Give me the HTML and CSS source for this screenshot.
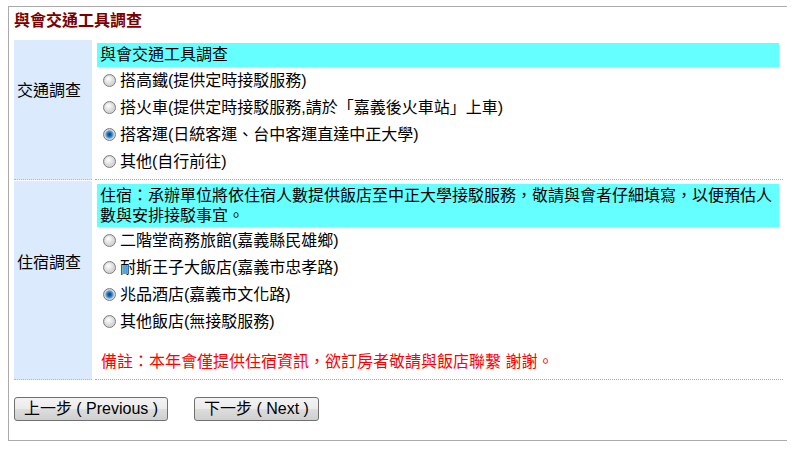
FILE: index.html
```html
<!DOCTYPE html>
<html lang="zh-Hant">
<head>
<meta charset="utf-8">
<title>與會交通工具調查</title>
<link rel="stylesheet" href="styles.css">
</head>
<body>
<div class="panel">
  <div class="title">與會交通工具調查</div>
  <div class="grid">
    <div class="label">交通調查</div>
    <div class="field">
      <div class="note">與會交通工具調查</div>
      <label class="opt"><input class="radio" type="radio" name="traffic">搭高鐵(提供定時接駁服務)</label>
      <label class="opt"><input class="radio" type="radio" name="traffic">搭火車(提供定時接駁服務,請於「嘉義後火車站」上車)</label>
      <label class="opt"><input class="radio" type="radio" name="traffic" checked>搭客運(日統客運、台中客運直達中正大學)</label>
      <label class="opt"><input class="radio" type="radio" name="traffic">其他(自行前往)</label>
    </div>
    <div class="label label2">住宿調查</div>
    <div class="field field2">
      <div class="note">住宿：承辦單位將依住宿人數提供飯店至中正大學接駁服務，敬請與會者仔細填寫，以便預估人數與安排接駁事宜。</div>
      <label class="opt"><input class="radio" type="radio" name="hotel">二階堂商務旅館(嘉義縣民雄鄉)</label>
      <label class="opt"><input class="radio" type="radio" name="hotel">耐斯王子大飯店(嘉義市忠孝路)</label>
      <label class="opt"><input class="radio" type="radio" name="hotel" checked>兆品酒店(嘉義市文化路)</label>
      <label class="opt"><input class="radio" type="radio" name="hotel">其他飯店(無接駁服務)</label>
      <div class="remark">備註：本年會僅提供住宿資訊，欲訂房者敬請與飯店聯繫 謝謝。</div>
    </div>
  </div>
  <div class="buttons">
    <button class="btn btn-prev" type="button">上一步 ( Previous )</button>
    <button class="btn btn-next" type="button">下一步 ( Next )</button>
  </div>
</div>
</body>
</html>
```

FILE: styles.css
```css
html, body {
  background: #ffffff;
}
body {
  margin: 6px 8px;
  font-family: "Liberation Sans", "Noto Sans CJK TC", Arial, sans-serif;
  font-size: 16px;
  color: #000000;
}
.panel {
  width: 769px;
  border: 1px solid #aaaaaa;
  padding: 4px 4px 19px 5px;
}
.title {
  font-weight: bold;
  color: #7a0000;
  line-height: 20px;
  margin-bottom: 9px;
}
.grid {
  display: grid;
  grid-template-columns: 78px 688px;
  column-gap: 3px;
  row-gap: 1px;
}
.label {
  background: #dbeafd;
  border-bottom: 1px dotted #a9b8cc;
  display: flex;
  align-items: center;
  padding: 0 0 37px 3px;
  line-height: 20px;
}
.label2 {
  padding-bottom: 35px;
}
.field {
  border-bottom: 1px dotted #aaaaaa;
  padding: 3px 4px 4px 2px;
}
.field2 {
  padding-bottom: 7px;
}
.note {
  background: #66ffff;
  line-height: 20px;
  padding: 2px 3px;
}
.field2 .note {
  padding: 2px 3px 1px;
}
.opt {
  display: flex;
  align-items: center;
  height: 27px;
  line-height: 20px;
}
.radio {
  -webkit-appearance: none;
  appearance: none;
  width: 13px;
  height: 13px;
  margin: 0 4px 0 6px;
  border-radius: 50%;
  border: 1px solid #7d7d7d;
  background: radial-gradient(circle at 40% 35%, #ffffff 0%, #e4e4e4 40%, #bdbdbd 100%);
  box-shadow: inset 0 0 0 1px #d6d6d6;
  box-sizing: border-box;
  flex: none;
}
.radio:checked {
  background: radial-gradient(circle at 50% 50%, #083f78 0, #1b6bb8 2px, #5aa4e0 3.5px, #c8c8c8 4.5px, #e8e8e8 100%);
}
.remark {
  color: #ff0000;
  line-height: 20px;
  margin-top: 17px;
  padding-left: 4px;
}
.buttons {
  display: flex;
  gap: 26px;
  margin-top: 17px;
}
.btn {
  height: 24px;
  padding: 0;
  font-family: "Liberation Sans", "Noto Sans CJK TC", Arial, sans-serif;
  font-size: 16px;
  color: #000000;
  border: 1px solid #707070;
  border-radius: 3px;
  background: linear-gradient(#f3f3f3 0%, #ebebeb 50%, #dddddd 51%, #cfcfcf 100%);
  line-height: 20px;
}
.btn-prev {
  width: 154px;
}
.btn-next {
  width: 125px;
}
```
